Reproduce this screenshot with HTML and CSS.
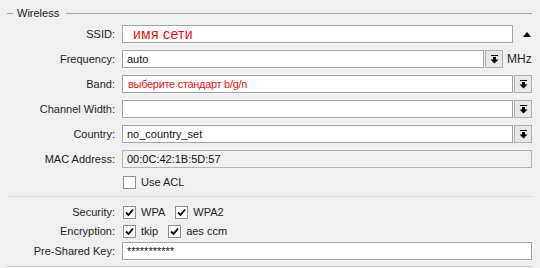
FILE: index.html
```html
<!DOCTYPE html>
<html lang="ru">

<head>
    <meta charset="UTF-8">
    <meta name="viewport" content="width=device-width, initial-scale=1.0">
    <title>Wireless</title>
    <link rel="stylesheet" href="styles.css">
</head>

<body>
    <div class="panel">
        <div class="legend">Wireless</div>

        <div class="row first">
            <label class="lbl">SSID:</label>
            <div class="field">
                <input class="box ssid" type="text" value="имя сети" readonly>
                <span class="collapse">
                    <svg width="8" height="5" viewBox="0 0 8 5"><polygon points="0,5 8,5 4,0" fill="#000"/></svg>
                </span>
            </div>
        </div>

        <div class="row">
            <label class="lbl">Frequency:</label>
            <div class="field">
                <input class="box" type="text" value="auto" readonly>
                <button class="drop">
                    <svg width="9" height="9" viewBox="0 0 9 9"><rect x="1" y="0" width="7" height="1" fill="#000"/><rect x="3" y="2" width="3" height="3" fill="#000"/><polygon points="0.5,4.5 8.5,4.5 4.5,8.5" fill="#000"/></svg>
                </button>
                <span class="unit">MHz</span>
            </div>
        </div>

        <div class="row">
            <label class="lbl">Band:</label>
            <div class="field">
                <input class="box hint" type="text" value="выберите стандарт b/g/n" readonly>
                <button class="drop">
                    <svg width="9" height="9" viewBox="0 0 9 9"><rect x="1" y="0" width="7" height="1" fill="#000"/><rect x="3" y="2" width="3" height="3" fill="#000"/><polygon points="0.5,4.5 8.5,4.5 4.5,8.5" fill="#000"/></svg>
                </button>
            </div>
        </div>

        <div class="row">
            <label class="lbl">Channel Width:</label>
            <div class="field">
                <input class="box" type="text" value="" readonly>
                <button class="drop">
                    <svg width="9" height="9" viewBox="0 0 9 9"><rect x="1" y="0" width="7" height="1" fill="#000"/><rect x="3" y="2" width="3" height="3" fill="#000"/><polygon points="0.5,4.5 8.5,4.5 4.5,8.5" fill="#000"/></svg>
                </button>
            </div>
        </div>

        <div class="row">
            <label class="lbl">Country:</label>
            <div class="field">
                <input class="box" type="text" value="no_country_set" readonly>
                <button class="drop">
                    <svg width="9" height="9" viewBox="0 0 9 9"><rect x="1" y="0" width="7" height="1" fill="#000"/><rect x="3" y="2" width="3" height="3" fill="#000"/><polygon points="0.5,4.5 8.5,4.5 4.5,8.5" fill="#000"/></svg>
                </button>
            </div>
        </div>

        <div class="row">
            <label class="lbl">MAC Address:</label>
            <div class="field">
                <input class="box static" type="text" value="00:0C:42:1B:5D:57" readonly>
            </div>
        </div>

        <div class="row check-row acl">
            <span class="lbl"></span>
            <div class="field">
                <span class="check"></span><span class="opt">Use ACL</span>
            </div>
        </div>

        <div class="sep"></div>

        <div class="row check-row security">
            <span class="lbl">Security:</span>
            <div class="field">
                <span class="check"><svg width="9" height="9" viewBox="0 0 9 9"><polyline points="1,4.5 3.5,7 8,1.5" fill="none" stroke="#000" stroke-width="1.8"/></svg></span><span class="opt">WPA</span>
                <span class="check"><svg width="9" height="9" viewBox="0 0 9 9"><polyline points="1,4.5 3.5,7 8,1.5" fill="none" stroke="#000" stroke-width="1.8"/></svg></span><span class="opt">WPA2</span>
            </div>
        </div>

        <div class="row check-row encryption">
            <span class="lbl">Encryption:</span>
            <div class="field">
                <span class="check"><svg width="9" height="9" viewBox="0 0 9 9"><polyline points="1,4.5 3.5,7 8,1.5" fill="none" stroke="#000" stroke-width="1.8"/></svg></span><span class="opt">tkip</span>
                <span class="check"><svg width="9" height="9" viewBox="0 0 9 9"><polyline points="1,4.5 3.5,7 8,1.5" fill="none" stroke="#000" stroke-width="1.8"/></svg></span><span class="opt">aes ccm</span>
            </div>
        </div>

        <div class="row psk">
            <label class="lbl">Pre-Shared Key:</label>
            <div class="field">
                <input class="box" type="text" value="***********" readonly>
            </div>
        </div>
    </div>
    <div class="next"></div>
</body>

</html>
```

FILE: styles.css
```css
body {
    font-family: "Liberation Sans", Arial, sans-serif;
    font-size: 11px;
    color: #1e1e1e;
    background: #f0f0f0;
    margin: 0;
}

.panel {
    padding: 5px 8px 0 7px;
}

.legend {
    display: flex;
    align-items: center;
    height: 16px;
    color: #222;
}

.legend::before {
    content: "";
    width: 6px;
    height: 1px;
    background: #a8a8a8;
    margin-right: 4px;
}

.legend::after {
    content: "";
    flex: 1;
    height: 1px;
    background: #a8a8a8;
    margin-left: 7px;
}

.row {
    display: flex;
    align-items: center;
    height: 18px;
    margin-top: 7px;
}

.row.first {
    margin-top: 4px;
}

.lbl {
    width: 108px;
    flex: none;
    text-align: right;
    margin-right: 7px;
}

.field {
    flex: 1;
    display: flex;
    align-items: center;
    height: 100%;
}

.box {
    flex: 1;
    min-width: 0;
    height: 18px;
    box-sizing: border-box;
    border: 1px solid #a3a3a3;
    background: #fff;
    font-family: inherit;
    font-size: 11px;
    color: #111;
    padding: 0 4px;
    margin: 0;
    outline: none;
}

.box.ssid {
    color: #e2141a;
    font-size: 14px;
    letter-spacing: 0.3px;
    padding-left: 10px;
}

.box.hint {
    color: #e2141a;
    letter-spacing: -0.3px;
    padding-left: 5px;
}

.box.static {
    background: #f0f0f0;
    border-color: #b4b4b4;
}

.collapse {
    width: 19px;
    flex: none;
    display: flex;
    justify-content: flex-end;
    padding-right: 1px;
    box-sizing: border-box;
}

.drop {
    width: 18px;
    height: 18px;
    flex: none;
    margin: 0 0 0 1px;
    padding: 0;
    border: 1px solid #b0b0b0;
    background: #e8e8e8;
    display: flex;
    align-items: center;
    justify-content: center;
}

.unit {
    flex: none;
    margin-left: 4px;
    width: 25px;
    font-size: 12px;
}

.check-row {
    height: 14px;
}

.check {
    width: 13px;
    height: 13px;
    box-sizing: border-box;
    border: 1px solid #8f8f8f;
    background: #fff;
    flex: none;
    margin-left: 1px;
    display: flex;
    align-items: center;
    justify-content: center;
}

.opt {
    margin-left: 5px;
    margin-right: 9px;
}

.sep {
    height: 1px;
    background: #dcdcdc;
    margin-top: 7px;
}

.row.security {
    margin-top: 8px;
}

.row.encryption {
    margin-top: 5px;
}

.row.psk {
    margin-top: 4px;
}

.next {
    height: 1px;
    background: #c8c8c8;
    margin: 6px 8px 0 7px;
}
```
